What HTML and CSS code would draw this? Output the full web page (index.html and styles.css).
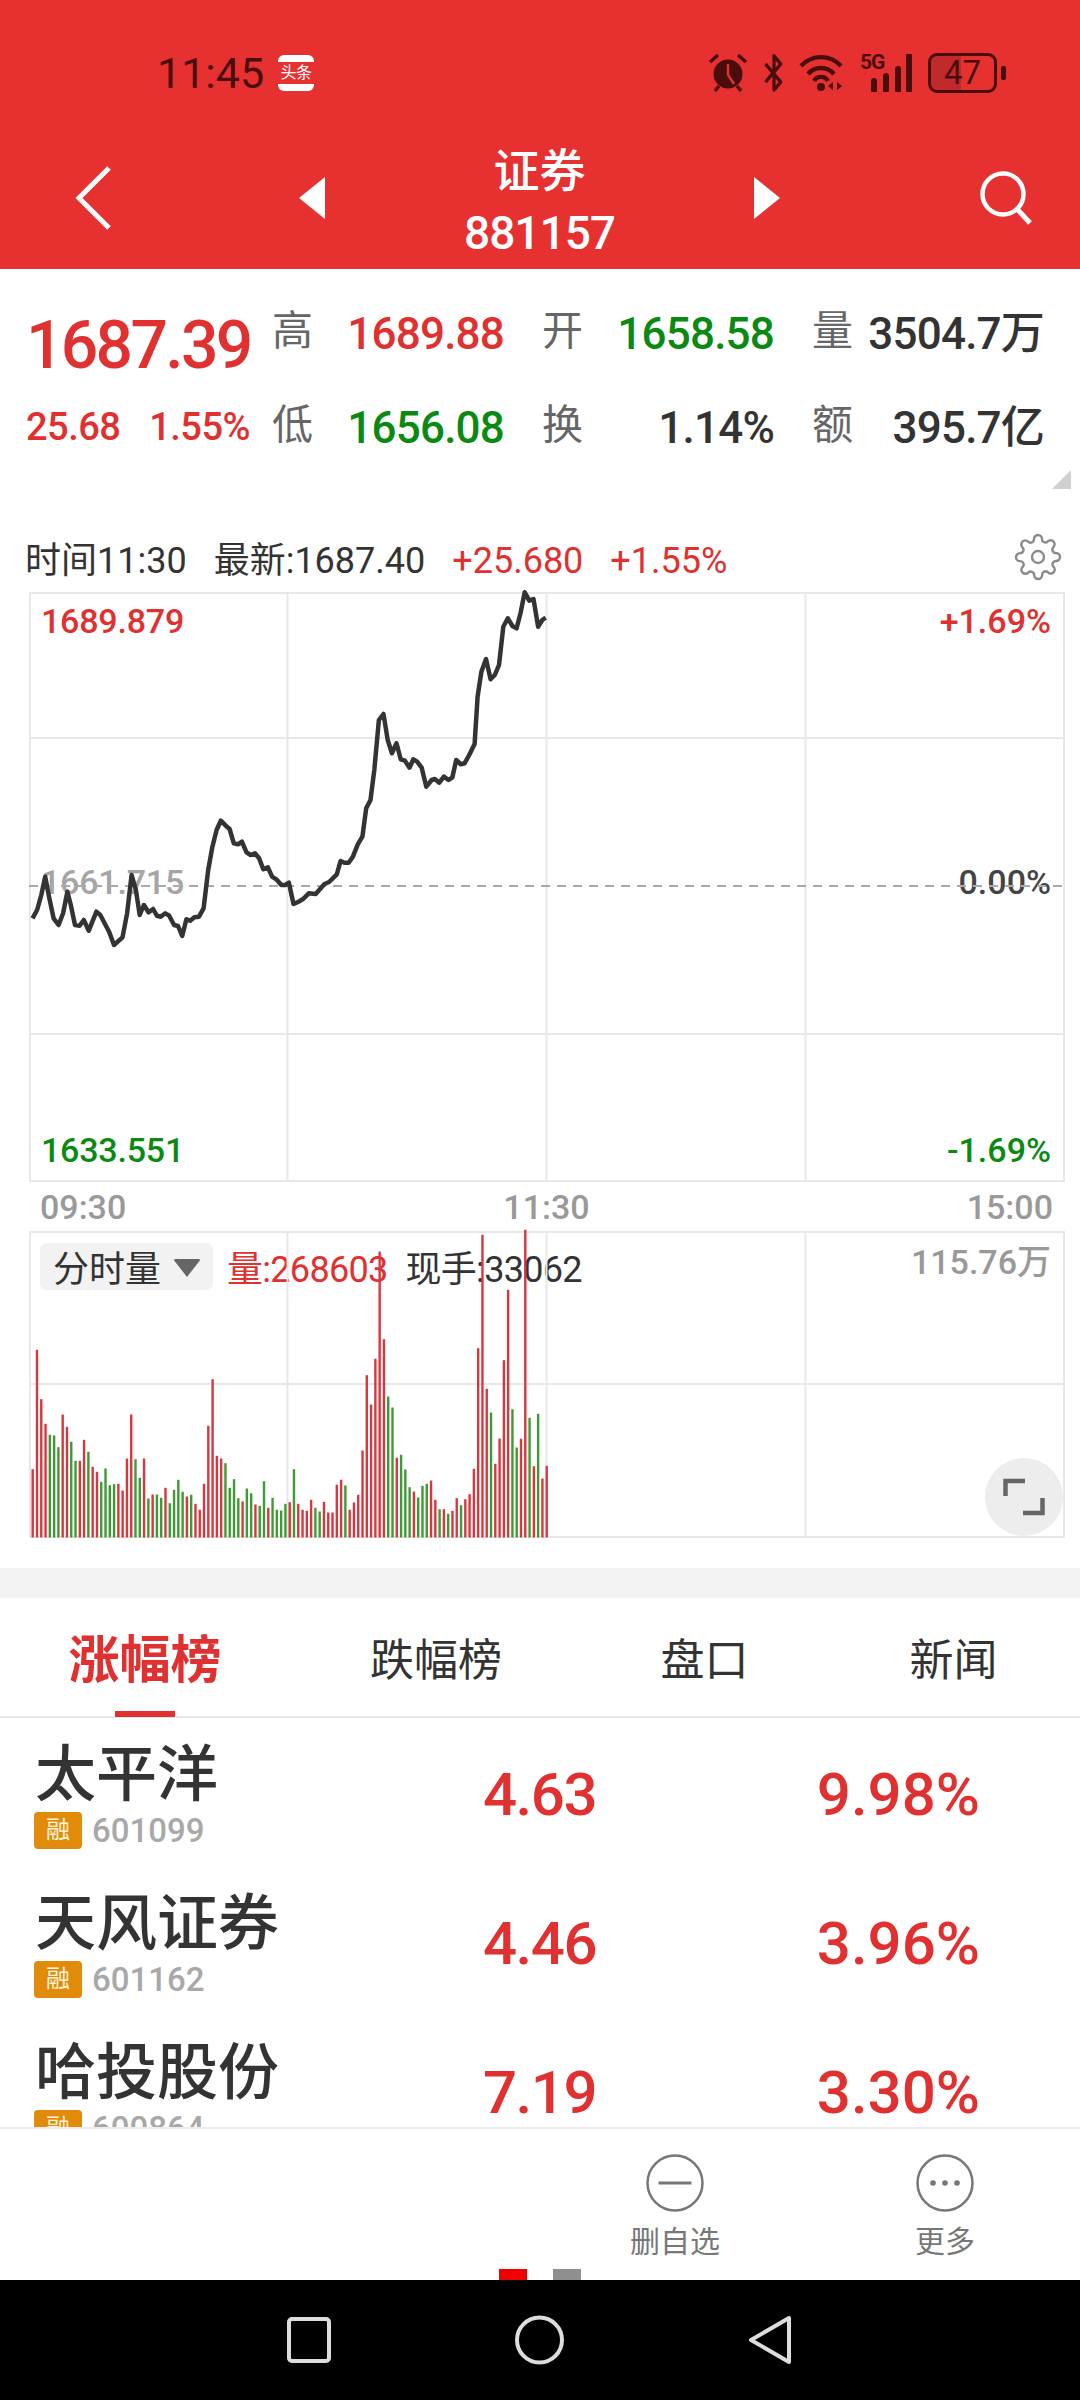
FILE: index.html
```html
<!DOCTYPE html>
<html lang="zh-CN">
<head>
    <meta charset="UTF-8">
    <meta name="viewport" content="width=device-width, initial-scale=1.0">
    <title>证券 881157</title>
    <link rel="stylesheet" href="styles.css">
</head>

<body>

    <header class="top-bar">
        <div class="status-bar">
            <span class="status-time">11:45</span>
            <span class="status-app"><span>头条</span></span>
            <div class="status-icons">
                <svg class="icon-alarm" width="40" height="40" viewBox="0 0 40 40">
                    <circle cx="20" cy="21" r="14.5" fill="#4a0d0d"/>
                    <path d="M20 11v11l6 9" fill="none" stroke="#e73131" stroke-width="2.4"/>
                    <path d="M2 9l8-7M38 9l-8-7M7 38l4-5M33 38l-4-5" fill="none" stroke="#4a0d0d" stroke-width="3.4"/>
                </svg>
                <svg class="icon-bt" width="22" height="38" viewBox="0 0 26 38" preserveAspectRatio="none">
                    <path d="M3 10l18 18-8 8V2l8 8L3 28" fill="none" stroke="#4a0d0d" stroke-width="3.8" stroke-linejoin="round"/>
                </svg>
                <svg class="icon-wifi" width="47" height="38" viewBox="0 0 47 38">
                    <path d="M2 12a27 27 0 0 1 40 0M9 20a17 17 0 0 1 26 0M15 27a8 8 0 0 1 14 0" fill="none" stroke="#4a0d0d" stroke-width="4.4"/>
                    <circle cx="22" cy="33" r="4" fill="#4a0d0d"/>
                    <path d="M34 28v8l-5-4zM38 28v8l5-4z" fill="#4a0d0d"/>
                </svg>
                <div class="icon-signal">
                    <span class="signal-label">5G</span>
                    <svg width="53" height="38" viewBox="0 0 53 38">
                        <path d="M14 27v9M26 22v14M38 15v21M49 2v34" fill="none" stroke="#4a0d0d" stroke-width="6" stroke-linecap="round"/>
                    </svg>
                </div>
                <div class="battery"><span class="battery-level">47</span></div>
                <span class="battery-nub"></span>
            </div>
        </div>
        <nav class="nav-bar">
            <svg class="nav-back" width="37" height="64" viewBox="0 0 37 64">
                <path d="M34 2L4 32l30 30" fill="none" stroke="#fff" stroke-width="5"/>
            </svg>
            <span class="tri tri-left"></span>
            <div class="nav-title">
                <div class="nav-name">证券</div>
                <div class="nav-code">881157</div>
            </div>
            <span class="tri tri-right"></span>
            <svg class="nav-search" width="54" height="54" viewBox="0 0 54 54">
                <circle cx="23" cy="23" r="20.5" fill="none" stroke="#fff" stroke-width="4.5"/>
                <path d="M37 38l13 14" fill="none" stroke="#fff" stroke-width="5"/>
            </svg>
        </nav>
    </header>

    <section class="quote">
        <div class="quote-price">1687.39</div>
        <div class="quote-label">高</div>
        <div class="quote-value up">1689.88</div>
        <div class="quote-label">开</div>
        <div class="quote-value down">1658.58</div>
        <div class="quote-label">量</div>
        <div class="quote-value">3504.7万</div>

        <div class="quote-change"><span>25.68</span><span>1.55%</span></div>
        <div class="quote-label">低</div>
        <div class="quote-value down">1656.08</div>
        <div class="quote-label">换</div>
        <div class="quote-value">1.14%</div>
        <div class="quote-label">额</div>
        <div class="quote-value">395.7亿</div>
        <span class="quote-corner"></span>
    </section>

    <section class="chart-info">
        <span>时间11:30</span>
        <span>最新:1687.40</span>
        <span class="up">+25.680</span>
        <span class="up">+1.55%</span>
        <svg class="icon-gear" width="48" height="48" viewBox="0 0 24 24">
            <circle cx="12" cy="12" r="3" fill="none" stroke="#8a8a8a" stroke-width="1.2"/>
            <path d="M19.4 15a1.65 1.65 0 0 0 .33 1.82l.06.06a2 2 0 0 1 0 2.83 2 2 0 0 1-2.83 0l-.06-.06a1.65 1.65 0 0 0-1.82-.33 1.65 1.65 0 0 0-1 1.51V21a2 2 0 0 1-2 2 2 2 0 0 1-2-2v-.09A1.65 1.65 0 0 0 9 19.4a1.65 1.65 0 0 0-1.82.33l-.06.06a2 2 0 0 1-2.83 0 2 2 0 0 1 0-2.83l.06-.06a1.65 1.65 0 0 0 .33-1.82 1.65 1.65 0 0 0-1.51-1H3a2 2 0 0 1-2-2 2 2 0 0 1 2-2h.09A1.65 1.65 0 0 0 4.6 9a1.65 1.65 0 0 0-.33-1.82l-.06-.06a2 2 0 0 1 0-2.83 2 2 0 0 1 2.83 0l.06.06a1.65 1.65 0 0 0 1.82.33H9a1.65 1.65 0 0 0 1-1.51V3a2 2 0 0 1 2-2 2 2 0 0 1 2 2v.09a1.65 1.65 0 0 0 1 1.51 1.65 1.65 0 0 0 1.82-.33l.06-.06a2 2 0 0 1 2.83 0 2 2 0 0 1 0 2.83l-.06.06a1.65 1.65 0 0 0-.33 1.82V9a1.65 1.65 0 0 0 1.51 1H21a2 2 0 0 1 2 2 2 2 0 0 1-2 2h-.09a1.65 1.65 0 0 0-1.51 1z" fill="none" stroke="#8a8a8a" stroke-width="1.2"/>
        </svg>
    </section>

    <section class="chart">
        <div class="plot plot-price">
            <span class="plot-label left top up">1689.879</span>
            <span class="plot-label left mid faded">1661.715</span>
            <span class="plot-label left bottom down">1633.551</span>
            <span class="plot-label right top up">+1.69%</span>
            <span class="plot-label right mid flat">0.00%</span>
            <span class="plot-label right bottom down">-1.69%</span>
            <svg class="plot-svg" width="1036" height="590" viewBox="0 0 1036 590">
                <g class="grid">
                    <path d="M0 146H1036M0 442H1036M258.500 0V590M517.500 0V590M776.500 0V590"/>
                </g>
                <path class="base-line" d="M0 294H1036"/>
                <polyline id="price_line" class="price-line" points=""/>
            </svg>
        </div>

        <div class="time-axis">
            <span>09:30</span>
            <span class="time-mid">11:30</span>
            <span>15:00</span>
        </div>

        <div class="plot plot-volume">
            <div class="volume-info">
                <div class="volume-pill">分时量<span class="pill-arrow"></span></div>
                <span class="up volume-num">量:268603</span>
                <span class="volume-num volume-now">现手:33062</span>
            </div>
            <span class="volume-max">115.76万</span>
            <svg id="volume_chart" class="plot-svg" width="1036" height="308" viewBox="0 0 1036 308">
                <g class="grid">
                    <path d="M0 153H1036M258.500 0V306M517.500 0V306M776.500 0V306"/>
                </g>
            </svg>
            <div class="expand-btn">
                <svg width="42" height="38" viewBox="0 0 42 38">
                    <path d="M2.500 18V3H22M39.500 20V35H20" fill="none" stroke="#666" stroke-width="4.500"/>
                </svg>
            </div>
        </div>
    </section>

    <div class="band"></div>

    <div class="tabs">
        <div class="tab active">涨幅榜</div>
        <div class="tab">跌幅榜</div>
        <div class="tab">盘口</div>
        <div class="tab">新闻</div>
    </div>

    <section class="stock-list">
        <div class="stock-row">
            <div>
                <div class="stock-name">太平洋</div>
                <div class="stock-meta"><span class="badge">融</span><span class="stock-code">601099</span></div>
            </div>
            <div class="stock-num stock-price">4.63</div>
            <div class="stock-num">9.98%</div>
        </div>
        <div class="stock-row">
            <div>
                <div class="stock-name">天风证券</div>
                <div class="stock-meta"><span class="badge">融</span><span class="stock-code">601162</span></div>
            </div>
            <div class="stock-num stock-price">4.46</div>
            <div class="stock-num">3.96%</div>
        </div>
        <div class="stock-row">
            <div>
                <div class="stock-name">哈投股份</div>
                <div class="stock-meta"><span class="badge">融</span><span class="stock-code">600864</span></div>
            </div>
            <div class="stock-num stock-price">7.19</div>
            <div class="stock-num">3.30%</div>
        </div>
    </section>

    <footer class="actions">
        <div class="action">
            <svg width="58" height="58" viewBox="0 0 58 58">
                <circle cx="29" cy="29" r="27.500" fill="none" stroke="#777" stroke-width="2.500"/>
                <path d="M12.500 29H45.500" stroke="#777" stroke-width="3"/>
            </svg>
            <span>删自选</span>
        </div>
        <div class="action">
            <svg width="58" height="58" viewBox="0 0 58 58">
                <circle cx="29" cy="29" r="27.500" fill="none" stroke="#777" stroke-width="2.500"/>
                <circle cx="17" cy="29" r="2.800" fill="#777"/>
                <circle cx="29" cy="29" r="2.800" fill="#777"/>
                <circle cx="41" cy="29" r="2.800" fill="#777"/>
            </svg>
            <span>更多</span>
        </div>
        <div class="pager"><span class="pager-dot on"></span><span class="pager-dot"></span></div>
    </footer>

    <div class="system-nav">
        <svg width="44" height="46" viewBox="0 0 44 46">
            <rect x="2" y="2" width="40" height="42" rx="3" fill="none" stroke="#ddd" stroke-width="4"/>
        </svg>
        <svg width="49" height="50" viewBox="0 0 49 50">
            <circle cx="24.500" cy="25" r="22.500" fill="none" stroke="#ddd" stroke-width="4"/>
        </svg>
        <svg width="43" height="50" viewBox="0 0 43 50">
            <path d="M41 3V47L3 25z" fill="none" stroke="#ddd" stroke-width="4" stroke-linejoin="round"/>
        </svg>
    </div>

    <script src="chart.js"></script>
</body>
</html>
```

FILE: styles.css
```css
* {
    box-sizing: border-box;
}
body {
    margin: 0;
    width: 1080px;
    height: 2400px;
    overflow: hidden;
    display: flex;
    flex-direction: column;
    background-color: white;
    color: #333;
    font-family: Roboto, "Noto Sans CJK SC", sans-serif;
}
.up {
    color: #e03030;
}
.down {
    color: #0a8a12;
}

/* top bar */
.top-bar {
    height: 269px;
    background-color: #e73131;
    flex-shrink: 0;
}
.status-bar {
    height: 146px;
    padding: 0 74px 0 157px;
    display: flex;
    align-items: center;
    color: #4a0d0d;
}
.status-time {
    font-size: 43px;
    line-height: 1;
}
.status-app {
    width: 36px;
    height: 36px;
    margin-left: 14px;
    border-radius: 6px;
    background-color: white;
    display: flex;
    align-items: center;
    justify-content: center;
}
.status-app span {
    width: 36px;
    height: 22px;
    background-color: #e73131;
    color: white;
    font-size: 16px;
    letter-spacing: -0.500px;
    line-height: 22px;
    text-align: center;
    white-space: nowrap;
}
.status-icons {
    margin-left: auto;
    display: flex;
    align-items: center;
}
.icon-bt {
    margin-left: 15px;
}
.icon-wifi {
    margin-left: 14px;
}
.icon-signal {
    margin-left: 14px;
    position: relative;
    width: 53px;
    height: 38px;
}
.signal-label {
    position: absolute;
    left: 0;
    top: -2px;
    font-size: 21px;
    font-weight: 700;
    letter-spacing: -1px;
    line-height: 1;
}
.battery {
    width: 69px;
    height: 40px;
    margin-left: 15px;
    border: 3px solid #4a0d0d;
    border-radius: 9px;
    background: linear-gradient(90deg, #c02a2a 47%, transparent 47%);
    font-size: 33px;
    line-height: 34px;
    text-align: center;
}
.battery-nub {
    width: 5px;
    height: 14px;
    margin-left: 4px;
    border-radius: 2px;
    background-color: #4a0d0d;
}
.nav-bar {
    height: 123px;
    padding: 0 46px 20px 75px;
    display: flex;
    align-items: center;
    color: white;
}
.tri {
    width: 0;
    height: 0;
    border-top: 21px solid transparent;
    border-bottom: 21px solid transparent;
}
.tri-left {
    margin-left: 187px;
    border-right: 26px solid white;
}
.tri-right {
    border-left: 26px solid white;
}
.nav-title {
    width: 429px;
    margin-top: 9px;
    text-align: center;
}
.nav-name {
    font-size: 46px;
    font-weight: 500;
    line-height: 58px;
}
.nav-code {
    margin-top: 4px;
    font-size: 46px;
    font-weight: 500;
    line-height: 58px;
    letter-spacing: -1px;
}
.nav-search {
    margin-left: auto;
}

/* quote */
.quote {
    height: 261px;
    padding: 17px 0 0 26px;
    display: grid;
    grid-template-columns: 246px repeat(3, 41px 229px);
    grid-auto-rows: 94px;
    align-items: center;
    position: relative;
    flex-shrink: 0;
}
.quote-price {
    padding-top: 24px;
    font-size: 66px;
    font-weight: 500;
    letter-spacing: -2.700px;
    color: #e03030;
}
.quote-change {
    width: 224px;
    display: flex;
    justify-content: space-between;
    font-size: 38px;
    font-weight: 500;
    letter-spacing: -0.500px;
    color: #e03030;
}
.quote-label {
    padding-bottom: 2px;
    font-size: 41px;
    line-height: 1.2;
    color: #666;
}
.quote-value {
    padding: 2px 38px 0 0;
    font-size: 44px;
    font-weight: 500;
    letter-spacing: -0.800px;
    line-height: 52px;
    text-align: right;
    white-space: nowrap;
}

.quote-corner {
    position: absolute;
    right: 9px;
    top: 201px;
    width: 19px;
    height: 19px;
    background-color: #d0d0d0;
    clip-path: polygon(100% 0, 100% 100%, 0 100%);
}

/* chart */
.chart-info {
    height: 56px;
    padding: 9px 18px 0 25px;
    display: flex;
    align-items: baseline;
    gap: 27px;
    font-size: 36px;
    line-height: 44px;
    flex-shrink: 0;
}
.icon-gear {
    align-self: center;
    margin: 0 0 12px auto;
}
.chart {
    margin: 6px 0 0 29px;
    width: 1036px;
    flex-shrink: 0;
}
.plot {
    position: relative;
    width: 1036px;
    border: 2px solid #e8e8e8;
}
.plot-price {
    height: 590px;
}
.plot-volume {
    height: 307px;
}
.plot-svg {
    position: absolute;
    left: -2px;
    top: -2px;
    overflow: visible;
}
.grid path {
    fill: none;
    stroke: #e8e8e8;
    stroke-width: 2;
}
.base-line {
    fill: none;
    stroke: #aaa;
    stroke-width: 2;
    stroke-dasharray: 9 7;
}
.price-line {
    fill: none;
    stroke: #333;
    stroke-width: 4.500;
    stroke-linejoin: round;
}
.plot-label {
    position: absolute;
    font-size: 34px;
    font-weight: 500;
    line-height: 40px;
}
.plot-label.left {
    left: 10px;
    letter-spacing: -0.200px;
}
.plot-label.right {
    right: 12px;
}
.plot-label.top {
    top: 7px;
}
.plot-label.mid {
    top: 268px;
}
.plot-label.bottom {
    top: 536px;
}
.faded {
    color: #a5a5a5;
}
.flat {
    color: #444;
}
.time-axis {
    height: 49px;
    padding: 0 12px 0 11px;
    display: flex;
    justify-content: space-between;
    align-items: center;
    font-size: 34px;
    font-weight: 500;
    color: #999;
}
.volume-info {
    position: absolute;
    left: 9px;
    top: 7px;
    display: flex;
    align-items: center;
    font-size: 36px;
    white-space: nowrap;
}
.volume-num {
    letter-spacing: -0.700px;
}
.volume-pill {
    width: 173px;
    height: 47px;
    margin-right: 14px;
    padding-left: 13px;
    border-radius: 7px;
    background-color: #f2f2f2;
    display: flex;
    align-items: center;
}
.pill-arrow {
    margin: 4px 0 0 12px;
    border-left: 14px solid transparent;
    border-right: 14px solid transparent;
    border-top: 18px solid #666;
    border-radius: 3px;
}
.volume-now {
    margin-left: 18px;
}
.volume-max {
    position: absolute;
    right: 12px;
    top: 9px;
    font-size: 34px;
    font-weight: 500;
    line-height: 40px;
    color: #999;
}
.expand-btn {
    position: absolute;
    right: 0;
    top: 225px;
    width: 78px;
    height: 78px;
    border-radius: 50%;
    background-color: #ededed;
    display: flex;
    align-items: center;
    justify-content: center;
}
.band {
    height: 30px;
    margin-top: 30px;
    background-color: #f3f3f3;
    flex-shrink: 0;
}

/* tabs */
.tabs {
    height: 120px;
    border-bottom: 2px solid #e8e8e8;
    display: grid;
    grid-template-columns: 290px 292px 245px 253px;
    font-size: 44px;
    flex-shrink: 0;
}
.tab {
    position: relative;
    padding-top: 8px;
    text-align: center;
    line-height: 110px;
}
.tab.active {
    font-size: 51px;
    font-weight: 700;
    color: #e03030;
}
.tab.active::after {
    content: "";
    position: absolute;
    left: 115px;
    bottom: -1px;
    width: 60px;
    height: 6px;
    background-color: #e03030;
}

/* list */
.stock-list {
    flex: 1;
    overflow: hidden;
}
.stock-row {
    height: 149px;
    padding: 4px 0 0 34px;
    display: grid;
    grid-template-columns: 420px 142px 384px;
    align-items: center;
}
.stock-name {
    font-size: 61px;
    font-weight: 500;
    line-height: 72px;
    margin: -1px 0 0 1px;
}
.stock-meta {
    display: flex;
    align-items: center;
}
.badge {
    width: 48px;
    height: 37px;
    border-radius: 4px;
    background-color: #e08c0a;
    color: #fff5dc;
    font-size: 24px;
    line-height: 36px;
    text-align: center;
}
.stock-code {
    margin-left: 10px;
    font-size: 33px;
    font-weight: 500;
    color: #a8a8a8;
}
.stock-num {
    font-size: 60px;
    font-weight: 500;
    text-align: right;
    color: #e03030;
}
.stock-price {
    letter-spacing: -1.500px;
}

/* bottom */
.actions {
    height: 153px;
    padding: 25px 75px 0 0;
    border-top: 2px solid #ececec;
    background-color: white;
    display: flex;
    justify-content: flex-end;
    gap: 150px;
    position: relative;
    flex-shrink: 0;
}
.action {
    width: 120px;
    display: flex;
    flex-direction: column;
    align-items: center;
    font-size: 30px;
    color: #777;
}
.action span {
    margin-top: 5px;
}
.pager {
    position: absolute;
    left: 499px;
    bottom: 0;
    display: flex;
    gap: 26px;
}
.pager-dot {
    width: 28px;
    height: 11px;
    background-color: #8f8f8f;
}
.pager-dot.on {
    background-color: #f00000;
}
.system-nav {
    height: 120px;
    padding-right: 2px;
    background-color: black;
    display: flex;
    align-items: center;
    justify-content: center;
    gap: 184px;
    flex-shrink: 0;
}
```

FILE: chart.js
```js
// traced points, scale below turns them into px inside the plot
const TRACE_X = 2.613;
const TRACE_Y = 3;
const PLOT_LEFT = 29;
const PLOT_TOP = 12;

const priceTrace = [
    [85,1015],[97,990],[108,945],[118,890],[128,950],[140,1015],[153,1035],[165,1000],[176,935],[185,975],
    [196,1035],[208,1037],[219,1020],[232,1052],[252,995],[262,1005],[285,1055],[298,1095],[320,1072],[332,1000],
    [344,885],[355,930],[365,1005],[376,975],[388,997],[400,987],[410,1007],[420,1010],[432,1000],[442,1007],
    [455,1035],[465,1038],[476,1068],[487,1018],[497,1022],[508,1012],[520,1010],[532,985],[544,870],[555,800],
    [566,750],[577,722],[590,737],[600,747],[611,790],[622,793],[632,785],[644,817],[655,825],[666,820],
    [677,835],[688,868],[700,862],[711,890],[722,898],[735,915],[745,915],[755,908],[767,972],[780,965],
    [792,957],[807,940],[825,942],[848,912],[860,906],[880,883],[890,843],[900,848],[911,848],[922,830],
    [935,793],[947,770],[957,685],[968,660],[978,570],[990,420],[1002,402],[1013,480],[1024,520],[1036,490],
    [1047,538],[1058,542],[1070,563],[1080,538],[1090,545],[1102,563],[1114,620],[1128,600],[1136,597],[1148,608],
    [1160,590],[1172,600],[1182,592],[1192,540],[1204,553],[1214,550],[1226,525],[1240,492],[1248,350],[1258,275],
    [1270,237],[1282,298],[1293,285],[1304,255],[1315,140],[1327,115],[1339,138],[1350,145],[1360,100],[1371,37],
    [1383,62],[1394,57],[1406,140],[1417,120],[1426,113]
];

// positive = red bar, negative = green bar
const volumes = [
    205,563,415,341,-308,-306,-271,369,332,-287,-230,230,293,-257,212,197,-167,-207,-157,-160,
    161,141,237,369,-235,-179,237,-117,129,-129,-119,149,-103,-143,-173,-137,123,-128,101,83,
    161,335,475,245,237,-223,-149,-175,-118,108,-147,-133,99,-95,-169,89,-119,-83,-81,-101,
    106,-205,101,83,80,113,-89,-78,107,75,75,158,173,-156,83,105,128,261,487,399,
    536,858,595,-423,-390,239,-248,-204,-151,138,-120,-155,-161,171,113,-85,85,-71,80,118,
    -97,115,130,206,568,908,446,-375,221,297,532,743,-385,-270,296,923,-359,214,-371,177,215
];

const drawPrice = () => {
    const points = priceTrace.map(([x, y]) => {
        return `${(x / TRACE_X - PLOT_LEFT).toFixed(1)},${(y / TRACE_Y - PLOT_TOP).toFixed(1)}`;
    });
    document.getElementById('price_line').setAttribute('points', points.join(' '));
};

const drawVolume = () => {
    const svg = document.getElementById('volume_chart');
    const baseY = 306.5;
    const step = 514 / (volumes.length - 1);

    volumes.forEach((vol, i) => {
        const h = Math.abs(vol) / TRACE_Y;
        const bar = document.createElementNS('http://www.w3.org/2000/svg', 'rect');
        bar.setAttribute('x', (2.5 + i * step).toFixed(2));
        bar.setAttribute('y', (baseY - h).toFixed(1));
        bar.setAttribute('width', 2.4);
        bar.setAttribute('height', h.toFixed(1));
        bar.setAttribute('fill', vol > 0 ? '#d6383e' : '#3f9a35');
        svg.appendChild(bar);
    });
};

drawPrice();
drawVolume();
```
